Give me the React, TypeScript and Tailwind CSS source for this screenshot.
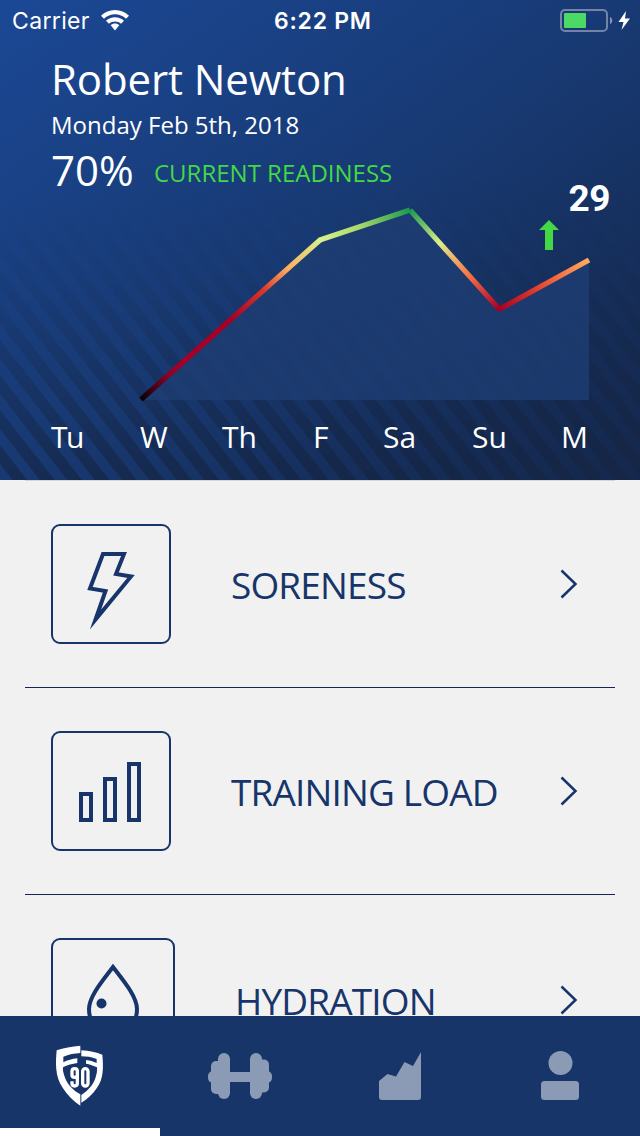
import React from "react";

const days = [
  { label: "Tu", box: "ml-[51px] w-[89px] tracking-[-1.6px]" },
  { label: "W", box: "w-[82px]" },
  { label: "Th", box: "w-[91px]" },
  { label: "F", box: "w-[70px]" },
  { label: "Sa", box: "w-[89px]" },
  { label: "Su", box: "w-[89px]" },
  { label: "M", box: "w-[40px]" },
];

const stripes = Array.from({ length: 38 }, (_, i) => 12.5 + (i - 1) * 27.4);

function Stripes() {
  return (
    <svg className="absolute inset-0" width="640" height="480" viewBox="0 0 640 480">
      <defs>
        <linearGradient id="shade" gradientUnits="userSpaceOnUse" x1="300" y1="180" x2="320" y2="480">
          <stop offset="0" stopColor="#152544" stopOpacity="0" />
          <stop offset="0.3" stopColor="#152544" stopOpacity="0.1" />
          <stop offset="0.65" stopColor="#152544" stopOpacity="0.36" />
          <stop offset="1" stopColor="#152544" stopOpacity="0.76" />
        </linearGradient>
      </defs>
      <g fill="url(#shade)">
        {stripes.map((x) => (
          <path key={x} d={`M${x} 480h14.8L${x + 14.8 - 250} 160h-14.8z`} />
        ))}
      </g>
    </svg>
  );
}

function Chart() {
  return (
    <svg className="absolute inset-0" width="640" height="480" viewBox="0 0 640 480">
      <defs>
        <linearGradient id="seg1" gradientUnits="userSpaceOnUse" x1="141" y1="399" x2="320" y2="240">
          <stop offset="0" stopColor="#080006" />
          <stop offset="0.15" stopColor="#8c0325" />
          <stop offset="0.22" stopColor="#a50026" />
          <stop offset="0.5" stopColor="#a50026" />
          <stop offset="0.68" stopColor="#d93429" />
          <stop offset="0.82" stopColor="#fdae61" />
          <stop offset="1" stopColor="#d9ef8b" />
        </linearGradient>
        <linearGradient id="seg2" gradientUnits="userSpaceOnUse" x1="319" y1="240" x2="410" y2="210">
          <stop offset="0" stopColor="#dcf08f" />
          <stop offset="0.45" stopColor="#a6d96a" />
          <stop offset="1" stopColor="#1a9850" />
        </linearGradient>
        <linearGradient id="seg3" gradientUnits="userSpaceOnUse" x1="410" y1="210" x2="499" y2="309">
          <stop offset="0" stopColor="#1a9850" />
          <stop offset="0.33" stopColor="#d9ef8b" />
          <stop offset="0.5" stopColor="#eead68" />
          <stop offset="0.68" stopColor="#f46d43" />
          <stop offset="1" stopColor="#a50026" />
        </linearGradient>
        <linearGradient id="seg4" gradientUnits="userSpaceOnUse" x1="499" y1="309" x2="589" y2="260">
          <stop offset="0" stopColor="#a50026" />
          <stop offset="0.35" stopColor="#d93429" />
          <stop offset="0.65" stopColor="#f46d43" />
          <stop offset="1" stopColor="#fdae61" />
        </linearGradient>
      </defs>
      <path d="M141 400L320 240L410 210L499 310L589 260V400Z" fill="#1e3d73" fillOpacity="0.8" />
      <g fill="none" strokeWidth="5.2">
        <path d="M141 399.500L320 240" stroke="url(#seg1)" />
        <path d="M319 240.300L410 210" stroke="url(#seg2)" />
        <path d="M410 210L500 310" stroke="url(#seg3)" />
        <path d="M499 309.500L589 260" stroke="url(#seg4)" />
      </g>
      <path d="M549 220l10 10h-6v20h-8v-20h-6z" fill="#43d845" />
    </svg>
  );
}

function StatusBar() {
  return (
    <div className="mt-px flex h-10 items-center pl-[12px] pr-[9px] font-['Inter'] text-[23px]">
      <div className="flex w-[262px] items-center">
        <span className="w-[89px] leading-10 tracking-[0.35px]">Carrier</span>
        <svg className="-mt-[2px]" width="28" height="21" viewBox="0 0 28 21" fill="white">
          <path d="M14 0C8.6 0 3.700 2.100 0 5.700L3 8.700C6 5.900 9.800 4.300 14 4.300S22 5.900 25 8.700L28 5.700C24.300 2.100 19.400 0 14 0ZM14 7.200C10.500 7.200 7.400 8.500 5 10.700L8 13.700C9.600 12.200 11.700 11.400 14 11.400S18.400 12.200 20 13.700L23 10.700C20.600 8.500 17.500 7.200 14 7.200ZM14 13.500C12.300 13.500 10.900 14.100 9.700 15.200L14 20.500L18.300 15.200C17.100 14.100 15.700 13.500 14 13.500Z" />
        </svg>
      </div>
      <span className="w-[285px] font-semibold leading-10 tracking-[0.75px]">6:22 PM</span>
      <svg width="72" height="24" viewBox="0 0 72 24">
        <rect x="2" y="1" width="46" height="21" rx="4" fill="none" stroke="#7384a8" strokeWidth="2" />
        <rect x="5" y="4" width="22" height="15" rx="1" fill="#4cd964" />
        <path d="M51 8c3 1 3 6 0 7z" fill="#8794b3" />
        <path d="M67 2L59.500 13h5L62.500 21L71 9.500h-5z" fill="white" />
      </svg>
    </div>
  );
}

function Header() {
  return (
    <header className="relative h-[480px] shrink-0 overflow-hidden bg-[linear-gradient(144deg,#1b4895_0%,#183a74_48%,#152c56_83%,#15284c_100%)] text-white">
      <Stripes />
      <Chart />
      <div className="relative flex h-full flex-col">
        <StatusBar />
        <div className="flex flex-col pl-[51px]">
          <h1 className="mt-[8px] h-[60px] text-[42px] leading-[60px] tracking-[-0.12px]">Robert Newton</h1>
          <p className="h-[31px] text-[24px] leading-[32px]">Monday Feb 5th, 2018</p>
          <div className="flex h-[60px] items-center">
            <span className="w-[103px] text-[42px] leading-[58px]">70%</span>
            <span className="pt-[5px] text-[24px] leading-[58px] text-[#43d845]">CURRENT READINESS</span>
          </div>
        </div>
        <div className="-mt-[23px] flex h-[44px] justify-end pr-[30px] font-['Roboto'] text-[37px] font-bold leading-[44px] tracking-[-0.5px]">29</div>
        <div className="mt-auto mb-[22px] flex h-[42px] text-[30px] leading-[42px]">
          {days.map((d) => (
            <span key={d.label} className={`${d.box} shrink-0`}>{d.label}</span>
          ))}
        </div>
      </div>
    </header>
  );
}

function SorenessIcon() {
  return (
    <svg width="116" height="116" viewBox="0 0 116 116" fill="none" stroke="#17356a" strokeWidth="4" strokeMiterlimit="20">
      <path d="M50 28H71L63 48L78 50.500L42.500 93.500L52.500 65L37 62.500Z" />
    </svg>
  );
}

function LoadIcon() {
  return (
    <svg width="116" height="116" viewBox="0 0 116 116" fill="none" stroke="#17356a" strokeWidth="4">
      <path d="M28 61H38V87H28ZM52 46H62V87H52ZM76 31H86V87H76Z" />
    </svg>
  );
}

function DropIcon() {
  return (
    <svg width="120" height="120" viewBox="0 0 120 120" fill="none" stroke="#17356a" strokeWidth="4">
      <path d="M60 27C51 39 36 56 36 69C36 84 47 94 60 94S84 84 84 69C84 56 69 39 60 27Z" />
      <circle cx="48.500" cy="63.500" r="5" fill="#17356a" stroke="none" />
    </svg>
  );
}

function Chevron() {
  return (
    <svg width="18" height="30" viewBox="0 0 18 30" fill="none" stroke="#17356a" strokeWidth="2.500">
      <path d="M1.500 1.500L15.500 15L1.500 28.500" />
    </svg>
  );
}

function Row({ icon, label, large = false }: { icon: React.ReactNode; label: string; large?: boolean }) {
  return (
    <div className={`mx-[25px] flex shrink-0 items-center border-b border-[#17274e] pl-[26px] ${large ? "h-[211px]" : "h-[207px]"}`}>
      <div className={`shrink-0 rounded-[9px] border-2 border-[#17356a] ${large ? "size-[124px]" : "size-[120px]"}`}>{icon}</div>
      <span className="ml-[60px] flex-1 whitespace-nowrap pt-px text-[37px] leading-[50px] tracking-[-0.85px] text-[#17356a]">{label}</span>
      <div className="mr-[37px]"><Chevron /></div>
    </div>
  );
}

function NavBar() {
  return (
    <nav className="relative grid h-[120px] shrink-0 grid-cols-4 bg-[#173568]">
      <div className="flex justify-center pt-[19px]">
        <svg width="80" height="80" viewBox="0 0 240 240">
          <path fill="white" d="M121 32C95 34 70 39 50 46C47 80 44 125 68 158C82 180 100 198 121 212V178C100 166 84 150 75 128C70 115 68 105 69 97C82 90 97 86 112 84V70C97 72 82 75 70 82V65C86 58 104 55 121 54Z" />
          <path fill="white" d="M124 46C148 47 170 52 187 59C190 95 192 130 170 160C158 178 143 192 124 203V180C143 168 158 152 166 130C170 118 172 108 171 97C160 92 150 88 138 86V75C150 76 160 80 170 84V72C155 66 140 64 124 64Z" />
          <g fill="none" stroke="white" strokeWidth="10">
            <path d="M112 124V109Q112 101 104 101T96 109V119Q96 127 104 127T112 119V145Q112 153 104 153T96 145V139" />
            <rect x="128" y="101" width="16" height="52" rx="8" />
          </g>
        </svg>
      </div>
      <div className="flex justify-center pt-[37px]">
        <svg width="64" height="46" viewBox="0 0 64 46" fill="#8b9ab5">
          <rect x="10" y="0" width="12" height="46" rx="6" />
          <rect x="3" y="8" width="14" height="33" rx="5" />
          <rect x="0" y="18" width="10" height="12" rx="5" />
          <rect x="42" y="0" width="12" height="46" rx="6" />
          <rect x="47" y="6.500" width="14" height="33" rx="5" />
          <rect x="54" y="18" width="10" height="12" rx="5" />
          <rect x="18" y="19" width="28" height="10" />
        </svg>
      </div>
      <div className="flex justify-center pt-[36px]">
        <svg width="42" height="48" viewBox="0 0 42 48" fill="#8b9ab5">
          <path d="M42 0V45Q42 48 39 48H3Q0 48 0 45V29L8.500 22L17 24.500L25.500 10L34 14Z" />
        </svg>
      </div>
      <div className="flex justify-center pt-[35px]">
        <svg width="38" height="49" viewBox="0 0 38 49" fill="#8b9ab5">
          <circle cx="19.500" cy="12" r="12" />
          <rect x="0" y="30" width="38" height="19" rx="3.500" />
        </svg>
      </div>
      <div className="absolute bottom-0 left-0 h-[8px] w-[160px] bg-white" />
    </nav>
  );
}

export default function App() {
  return (
    <div className="flex h-[1136px] w-[640px] flex-col overflow-hidden bg-[#f1f1f1] font-['Open_Sans',sans-serif]">
      <Header />
      <main className="flex h-[536px] shrink-0 flex-col overflow-hidden">
        <div className="mx-[25px] h-px shrink-0 bg-[#d5d5d7]" />
        <Row icon={<SorenessIcon />} label="SORENESS" />
        <Row icon={<LoadIcon />} label="TRAINING LOAD" />
        <Row icon={<DropIcon />} label="HYDRATION" large />
      </main>
      <NavBar />
    </div>
  );
}
